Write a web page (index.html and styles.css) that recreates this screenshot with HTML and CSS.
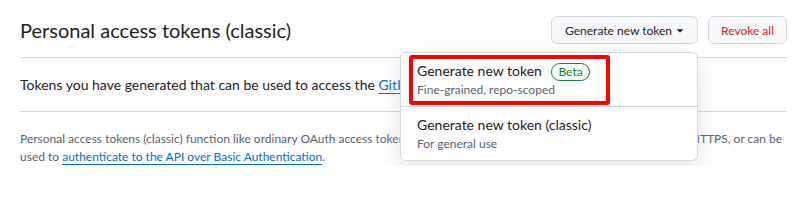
FILE: index.html
```html
<!DOCTYPE html>
<html lang="en">
<head>
    <meta charset="UTF-8">
    <meta name="viewport" content="width=device-width, initial-scale=1.0">
    <title>Personal access tokens (classic)</title>
    <link rel="stylesheet" href="styles.css">
</head>
<body>
    <div class="page">
        <div class="subhead">
            <h2 class="subhead-title">Personal access tokens (classic)</h2>
            <div class="actions">
                <div class="dropdown">
                    <button class="btn">Generate new token
                        <svg class="caret" viewBox="0 0 16 16" width="16" height="16"><path d="m4.427 7.427 3.396 3.396a.25.25 0 0 0 .354 0l3.396-3.396A.25.25 0 0 0 11.396 7H4.604a.25.25 0 0 0-.177.427Z"></path></svg>
                    </button>
                    <div class="menu">
                        <a class="menu-item highlight" href="#">
                            <span class="item-title">Generate new token <span class="label">Beta</span></span>
                            <span class="item-desc">Fine-grained, repo-scoped</span>
                        </a>
                        <a class="menu-item" href="#">
                            <span class="item-title">Generate new token (classic)</span>
                            <span class="item-desc">For general use</span>
                        </a>
                    </div>
                </div>
                <button class="btn btn-danger">Revoke all</button>
            </div>
        </div>
        <p class="intro">Tokens you have generated that can be used to access the <a href="#">GitHub API</a>.</p>
        <p class="note">Personal access tokens (classic) function like ordinary OAuth access tokens. They can be used instead of a password for Git over HTTPS, or can be used to <a href="#">authenticate to the API over Basic Authentication</a>.</p>
    </div>
</body>
</html>
```

FILE: styles.css
```css
body {
    margin: 0;
    background: #fff;
    color: #1f2328;
    font-family: Lato, "Noto Sans", sans-serif;
}
.page {
    padding: 16px 19px 0 20px;
}
.subhead {
    display: flex;
    align-items: center;
    justify-content: space-between;
    padding-bottom: 13px;
    border-bottom: 1px solid #d1d9e0;
}
.subhead-title {
    margin: 0;
    font-size: 20px;
    font-weight: 400;
    line-height: 28px;
}
.actions {
    display: flex;
    gap: 10px;
}
.dropdown {
    position: relative;
}
.btn {
    display: flex;
    align-items: center;
    height: 28px;
    padding: 0 10px 0 13px;
    font-family: inherit;
    font-size: 12px;
    color: #1f2328;
    background: #f6f8fa;
    border: 1px solid #d1d9e0;
    border-radius: 6px;
    cursor: pointer;
}
.btn-danger {
    color: #d1242f;
    padding: 0 12px;
}
.caret {
    width: 14px;
    height: 14px;
    margin-left: 1px;
    fill: #1f2328;
}
.menu {
    position: absolute;
    top: 36px;
    right: 0;
    width: 296px;
    background: #fff;
    border: 1px solid #d1d9e0;
    border-radius: 6px;
    box-shadow: 0 8px 24px rgba(140, 149, 159, 0.25);
}
.menu-item {
    position: relative;
    display: flex;
    flex-direction: column;
    padding: 8px 16px 7px;
    text-decoration: none;
    color: #1f2328;
}
.menu-item + .menu-item {
    border-top: 1px solid #d1d9e0;
}
.item-title {
    font-size: 14px;
    font-weight: 400;
    line-height: 20px;
}
.item-desc {
    font-size: 12px;
    line-height: 18px;
    color: #59636e;
}
.label {
    display: inline-block;
    margin-left: 6px;
    padding: 0 6px;
    font-size: 12px;
    line-height: 16px;
    color: #1a7f37;
    border: 1px solid #1a7f37;
    border-radius: 2em;
}
.highlight::after {
    content: "";
    position: absolute;
    left: 8px;
    top: 2px;
    width: 193px;
    height: 42px;
    border: 4px solid #f00;
    border-radius: 3px;
}
.intro {
    margin: 0;
    padding: 16px 0;
    font-size: 14px;
    line-height: 21px;
    border-bottom: 1px solid #d1d9e0;
}
.note {
    margin: 18px 0 0;
    font-size: 12px;
    line-height: 18px;
    color: #59636e;
}
a {
    color: #0969da;
}
.intro a, .note a {
    text-decoration: underline;
    text-underline-offset: 3px;
}
```
